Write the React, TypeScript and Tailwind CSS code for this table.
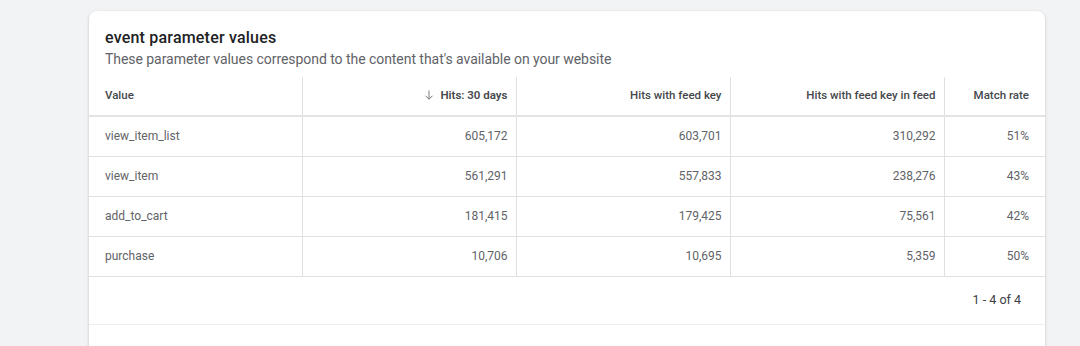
import React from 'react';

const rows = [
  { value: 'view_item_list', hits: '605,172', key: '603,701', inFeed: '310,292', rate: '51%' },
  { value: 'view_item', hits: '561,291', key: '557,833', inFeed: '238,276', rate: '43%' },
  { value: 'add_to_cart', hits: '181,415', key: '179,425', inFeed: '75,561', rate: '42%' },
  { value: 'purchase', hits: '10,706', key: '10,695', inFeed: '5,359', rate: '50%' },
];

function SortArrow() {
  return (
    <svg width="12" height="12" viewBox="0 0 24 24" className="inline-block mr-[5px] -mt-[2px]">
      <path d="M12 3v17M5 13.5L12 20.5l7-7" fill="none" stroke="#5f6368" strokeWidth="1.7" />
    </svg>
  );
}

export default function App() {
  return (
    <div
      className="w-[1080px] h-[346px] overflow-hidden bg-[#f1f3f4] pt-[11px] pl-[89px]"
      style={{ fontFamily: 'Roboto, "Liberation Sans", sans-serif' }}
    >
      <div className="w-[956px] h-[400px] bg-white rounded-[8px] shadow-[0_1px_2px_rgba(60,64,67,0.2),0_1px_3px_1px_rgba(60,64,67,0.08)]">
        <div className="px-4 pt-[17px]">
          <h2 className="text-[16px] leading-[20px] font-medium tracking-[0.2px] text-[#202124]">event parameter values</h2>
          <p className="text-[14px] leading-[20px] tracking-[-0.05px] text-[#5f6368] mt-[1px]">
            These parameter values correspond to the content that's available on your website
          </p>
        </div>
        <table className="mt-[8px] w-full border-collapse table-fixed text-[12px]">
          <colgroup>
            <col className="w-[213px]" />
            <col className="w-[214px]" />
            <col className="w-[214px]" />
            <col className="w-[214px]" />
            <col />
          </colgroup>
          <thead>
            <tr className="h-[39px] border-b-2 border-[#e3e3e3] text-[#45484c] text-[11.5px]">
              <th className="text-left font-medium pl-4 pr-2">Value</th>
              <th className="text-right font-semibold pr-2 border-l border-[#e0e0e0]">
                <SortArrow />Hits: 30 days
              </th>
              <th className="text-right font-medium pr-2 border-l border-[#e0e0e0]">Hits with feed key</th>
              <th className="text-right font-medium pr-2 border-l border-[#e0e0e0]">Hits with feed key in feed</th>
              <th className="text-right font-medium pr-4 border-l border-[#e0e0e0]">Match rate</th>
            </tr>
          </thead>
          <tbody className="text-[#5f6368]">
            {rows.map((r) => (
              <tr key={r.value} className="h-[40px] border-b border-[#e0e0e0]">
                <td className="pl-4 pr-2">{r.value}</td>
                <td className="text-right pr-2 border-l border-[#e0e0e0]">{r.hits}</td>
                <td className="text-right pr-2 border-l border-[#e0e0e0]">{r.key}</td>
                <td className="text-right pr-2 border-l border-[#e0e0e0]">{r.inFeed}</td>
                <td className="text-right pr-4 border-l border-[#e0e0e0]">{r.rate}</td>
              </tr>
            ))}
          </tbody>
        </table>
        <div className="h-[48px] flex items-center justify-end pr-6 text-[12.5px] text-[#3c4043] border-b border-[#eeeeee]">
          1 - 4 of 4
        </div>
      </div>
    </div>
  );
}
